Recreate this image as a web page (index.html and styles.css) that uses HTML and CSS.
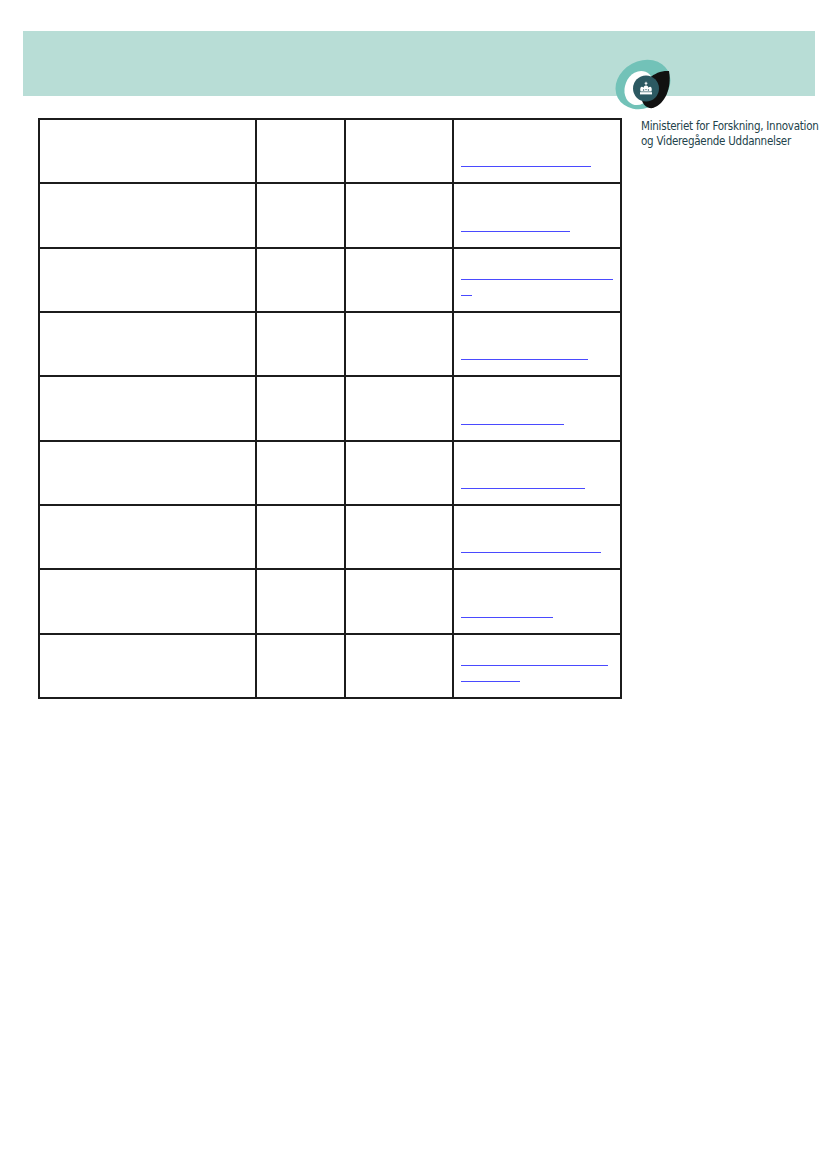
FILE: index.html
```html
<!DOCTYPE html>
<html lang="da">
<head>
<meta charset="utf-8">
<title>Uddannelses- og Forskningsministeriet</title>
<link rel="stylesheet" href="styles.css">
</head>
<body>
<div class="page">
  <div class="band"></div>
  <svg class="logo" viewBox="0 0 60 52" width="60" height="52" aria-hidden="true">
    <ellipse cx="30" cy="25.5" rx="28.5" ry="23.5" transform="rotate(-28 30 25.5)" fill="#72c2b8"/>
    <ellipse cx="26" cy="29" rx="14" ry="17.5" transform="rotate(22 26 29)" fill="#ffffff"/>
    <path d="M56,12 C42,11 29,22 28,36 C28,45 34,50 40,49 C52,45 59,29 56,12 Z" fill="#111111"/>
    <circle cx="33" cy="29.5" r="13" fill="#2c5962"/>
    <g fill="#ffffff">
      <rect x="27" y="33.2" width="12" height="2.2"/>
      <path d="M27.5,32.4 C26.4,28 28.8,26.4 30.6,28.8 C30.9,25.6 35.1,25.6 35.4,28.8 C37.2,26.4 39.6,28 38.5,32.4 Z"/>
      <rect x="32.5" y="22.8" width="1" height="3.4"/>
      <rect x="31.6" y="23.8" width="2.8" height="1"/>
    </g>
    <g fill="#2c5962">
      <circle cx="30.6" cy="31" r="0.7"/>
      <circle cx="33" cy="30.6" r="0.7"/>
      <circle cx="35.4" cy="31" r="0.7"/>
    </g>
  </svg>
  <div class="content">
    <div class="grid">
      <div class="cell"></div><div class="cell"></div><div class="cell"></div>
      <div class="cell links"><a class="line" style="width:130px"></a></div>
      <div class="cell"></div><div class="cell"></div><div class="cell"></div>
      <div class="cell links"><a class="line" style="width:109px"></a></div>
      <div class="cell"></div><div class="cell"></div><div class="cell"></div>
      <div class="cell links"><a class="line" style="width:152px"></a><a class="line" style="width:11px"></a></div>
      <div class="cell"></div><div class="cell"></div><div class="cell"></div>
      <div class="cell links"><a class="line" style="width:127px"></a></div>
      <div class="cell"></div><div class="cell"></div><div class="cell"></div>
      <div class="cell links"><a class="line" style="width:103px"></a></div>
      <div class="cell"></div><div class="cell"></div><div class="cell"></div>
      <div class="cell links"><a class="line" style="width:124px"></a></div>
      <div class="cell"></div><div class="cell"></div><div class="cell"></div>
      <div class="cell links"><a class="line" style="width:140px"></a></div>
      <div class="cell"></div><div class="cell"></div><div class="cell"></div>
      <div class="cell links"><a class="line" style="width:92px"></a></div>
      <div class="cell"></div><div class="cell"></div><div class="cell"></div>
      <div class="cell links"><a class="line" style="width:147px"></a><a class="line" style="width:59px"></a></div>
    </div>
    <div class="ministry">
      <div>Ministeriet for Forskning, Innovation</div>
      <div>og Videregående Uddannelser</div>
    </div>
  </div>
</div>
</body>
</html>
```

FILE: styles.css
```css
html, body {
  margin: 0;
  padding: 0;
  background: #ffffff;
}

.page {
  position: relative;
  width: 827px;
  height: 1138px;
  padding-top: 31px;
  font-family: "Liberation Sans", Arial, sans-serif;
}

.band {
  margin: 0 12px 0 23px;
  height: 65px;
  background: #b8ddd6;
}

.logo {
  position: absolute;
  left: 613px;
  top: 59px;
}

.content {
  display: flex;
  align-items: flex-start;
  margin-top: 22px;
  padding-left: 38px;
}

.grid {
  display: grid;
  grid-template-columns: 217px 89px 108px 168px;
  grid-auto-rows: 64.33px;
  border-left: 2px solid #1c1c1c;
  border-top: 2px solid #1c1c1c;
}

.cell {
  box-sizing: border-box;
  border-right: 2px solid #1c1c1c;
  border-bottom: 2px solid #1c1c1c;
}

.links {
  display: flex;
  flex-direction: column;
  justify-content: flex-end;
  gap: 15px;
  padding: 0 7px 15px 7px;
}

.line {
  display: block;
  height: 1px;
  background: #4a4aff;
}

.ministry {
  margin-left: 19px;
  margin-top: 1px;
  font-family: "DejaVu Sans Condensed", "Liberation Sans", sans-serif;
  font-size: 11.5px;
  letter-spacing: -0.25px;
  line-height: 15px;
  color: #22424a;
  white-space: nowrap;
}
```
